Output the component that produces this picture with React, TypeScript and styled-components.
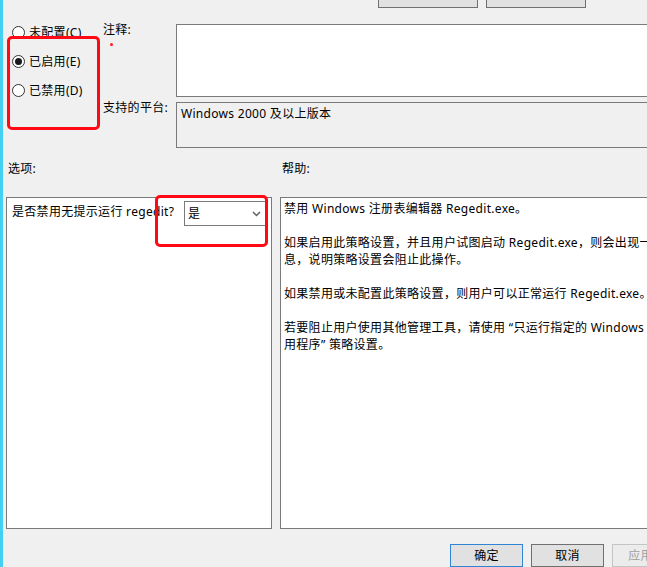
import React from "react";
import styled, { createGlobalStyle } from "styled-components";

const Global = createGlobalStyle`
  html, body {
    margin: 0;
    padding: 0;
    overflow: hidden;
    background: #f0f0f0;
  }
  body {
    font-family: "Noto Sans", "Noto Sans CJK SC", sans-serif;
    font-size: 12px;
    letter-spacing: 0.3px;
    color: #000;
  }
  * { box-sizing: border-box; }
`;

const Dialog = styled.div`
  width: 696px;
  height: 567px;
  border-left: 3px solid #44d0f2;
  padding-right: 11px;
  display: flex;
  flex-direction: column;
  background: #f0f0f0;
`;

const TopBar = styled.div`
  display: flex;
  gap: 8px;
  padding-left: 375px;
  margin-top: -15px;
  height: 23px;
  flex: none;
`;

const Button = styled.div<{ $variant?: "default" | "disabled" | "normal" }>`
  flex: none;
  width: 73px;
  height: 23px;
  display: flex;
  align-items: center;
  justify-content: center;
  background: ${(p) => (p.$variant === "disabled" ? "#ececec" : "#e1e1e1")};
  border: 1px solid
    ${(p) =>
      p.$variant === "default"
        ? "#2f84d3"
        : p.$variant === "disabled"
        ? "#c4c4c4"
        : "#707070"};
  color: ${(p) => (p.$variant === "disabled" ? "#a0a0a0" : "#000")};
  line-height: 17px;
  white-space: nowrap;
`;

const NavButton = styled(Button)`
  width: 100px;
  padding-bottom: 6px;
`;

const Upper = styled.div`
  display: grid;
  grid-template-columns: 100px 73px 1fr;
  grid-template-rows: 73px 46px;
  row-gap: 5px;
  margin-top: 16px;
  flex: none;
`;

const RadioColumn = styled.div`
  grid-row: 1 / 3;
  grid-column: 1;
  position: relative;
  display: flex;
  flex-direction: column;
  gap: 12px;
  padding-left: 9px;
`;

const RadioRow = styled.label`
  display: flex;
  align-items: center;
  gap: 4px;
  height: 17px;
  line-height: 17px;
  white-space: nowrap;
`;

const RadioCircle = styled.span<{ $checked?: boolean }>`
  width: 13px;
  height: 13px;
  border-radius: 50%;
  border: 1px solid #333;
  background: #fff;
  display: flex;
  align-items: center;
  justify-content: center;
  flex: none;
  &::after {
    content: "";
    display: ${(p) => (p.$checked ? "block" : "none")};
    width: 7px;
    height: 7px;
    border-radius: 50%;
    background: #1a1a1a;
  }
`;

const Highlight = styled.div<{
  $left: number;
  $top: number;
  $w: number;
  $h: number;
}>`
  position: absolute;
  left: ${(p) => p.$left}px;
  top: ${(p) => p.$top}px;
  width: ${(p) => p.$w}px;
  height: ${(p) => p.$h}px;
  border: 3px solid #ff0a14;
  border-radius: 5px;
  pointer-events: none;
`;

const FieldLabel = styled.div<{ $row: number }>`
  grid-column: 2;
  grid-row: ${(p) => p.$row};
  line-height: 12px;
  white-space: nowrap;
  display: flex;
  flex-direction: column;
`;

const RedDot = styled.span`
  width: 3px;
  height: 3px;
  border-radius: 50%;
  background: #ff1a1a;
  margin: 7px 0 0 7px;
`;

const Field = styled.div<{ $row: number; $readonly?: boolean }>`
  grid-column: 3;
  grid-row: ${(p) => p.$row};
  border: 1px solid #7a7a7a;
  background: ${(p) => (p.$readonly ? "#f0f0f0" : "#fff")};
  padding: 2px 4px;
  line-height: 17px;
  white-space: nowrap;
  overflow: hidden;
`;

const PaneGrid = styled.div`
  display: grid;
  grid-template-columns: 266px 1fr;
  column-gap: 8px;
  padding-left: 3px;
  flex: none;
`;

const SectionLabels = styled(PaneGrid)`
  margin-top: 12px;
  line-height: 17px;
  & > span {
    padding-left: 2px;
  }
`;

const Panels = styled(PaneGrid)`
  margin-top: 20px;
  height: 332px;
`;

const Panel = styled.div`
  position: relative;
  border: 1px solid #7a7a7a;
  background: #fff;
`;

const OptionsPanel = styled(Panel)`
  padding: 3px 5px;
`;

const OptionRow = styled.div`
  display: flex;
  align-items: flex-start;
`;

const OptionText = styled.span`
  padding-top: 2px;
  line-height: 17px;
  white-space: nowrap;
`;

const Select = styled.div`
  margin-left: auto;
  width: 82px;
  height: 25px;
  border: 1px solid #7a7a7a;
  background: #fff;
  display: flex;
  align-items: center;
  justify-content: space-between;
  padding: 0 4px 0 3px;
  line-height: 17px;
`;

const HelpPanel = styled(Panel)`
  padding: 2px 3px;
  overflow: hidden;
  line-height: 17px;
  white-space: nowrap;
`;

const HelpLine = styled.div`
  height: 17px;
`;

const ButtonRow = styled.div`
  display: flex;
  justify-content: flex-end;
  gap: 8px;
  margin-top: 15px;
  flex: none;
`;

const Chevron = () => (
  <svg width="9" height="6" viewBox="0 0 9 6" fill="none">
    <path d="M1 1 L4.5 4.5 L8 1" stroke="#606060" strokeWidth="1.5" />
  </svg>
);

const helpLines = [
  "禁用 Windows 注册表编辑器 Regedit.exe。",
  "",
  "如果启用此策略设置，并且用户试图启动 Regedit.exe，则会出现一条消",
  "息，说明策略设置会阻止此操作。",
  "",
  "如果禁用或未配置此策略设置，则用户可以正常运行 Regedit.exe。",
  "",
  "若要阻止用户使用其他管理工具，请使用 “只运行指定的 Windows 应",
  "用程序” 策略设置。",
];

export default function App() {
  return (
    <>
      <Global />
      <Dialog>
        <TopBar>
          <NavButton>上一个设置(P)</NavButton>
          <NavButton>下一个设置(N)</NavButton>
        </TopBar>

        <Upper>
          <RadioColumn>
            <RadioRow>
              <RadioCircle />
              未配置(C)
            </RadioRow>
            <RadioRow>
              <RadioCircle $checked />
              已启用(E)
            </RadioRow>
            <RadioRow>
              <RadioCircle />
              已禁用(D)
            </RadioRow>
            <Highlight $left={4} $top={12} $w={93} $h={94} />
          </RadioColumn>

          <FieldLabel $row={1}>
            注释:
            <RedDot />
          </FieldLabel>
          <Field $row={1} />

          <FieldLabel $row={2}>支持的平台:</FieldLabel>
          <Field $row={2} $readonly>
            Windows 2000 及以上版本
          </Field>
        </Upper>

        <SectionLabels>
          <span>选项:</span>
          <span>帮助:</span>
        </SectionLabels>

        <Panels>
          <OptionsPanel>
            <OptionRow>
              <OptionText>是否禁用无提示运行 regedit?</OptionText>
              <Select>
                <span>是</span>
                <Chevron />
              </Select>
            </OptionRow>
            <Highlight $left={148} $top={-3} $w={113} $h={52} />
          </OptionsPanel>
          <HelpPanel>
            {helpLines.map((l, i) => (
              <HelpLine key={i}>{l}</HelpLine>
            ))}
          </HelpPanel>
        </Panels>

        <ButtonRow>
          <Button $variant="default">确定</Button>
          <Button $variant="normal">取消</Button>
          <Button $variant="disabled">应用(A)</Button>
        </ButtonRow>
      </Dialog>
    </>
  );
}
